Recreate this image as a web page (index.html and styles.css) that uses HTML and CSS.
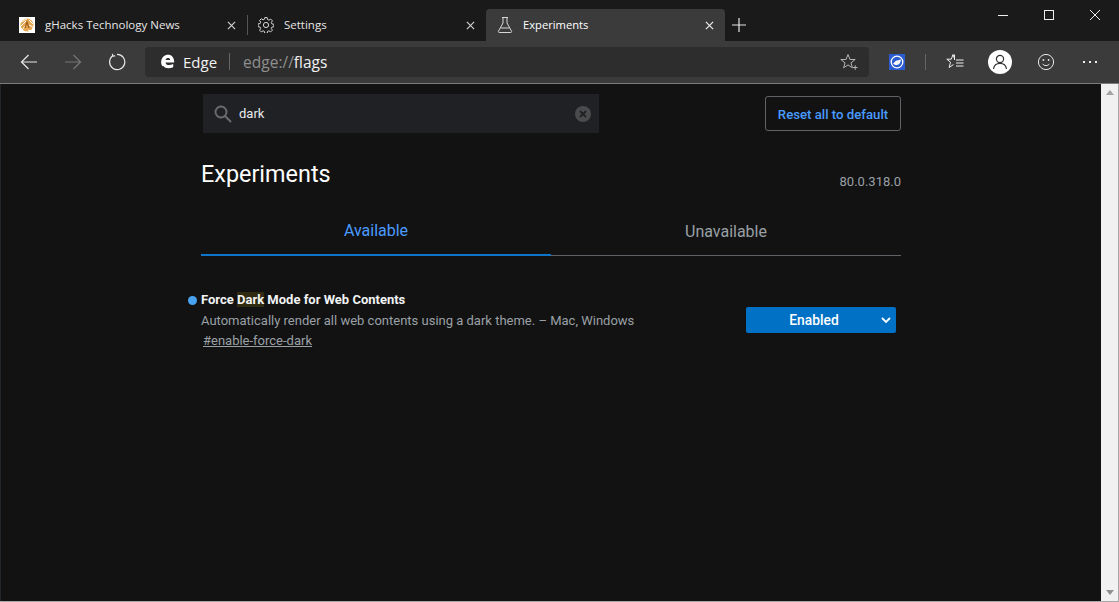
FILE: index.html
```html
<!DOCTYPE html>
<html lang="en">
<head>
<meta charset="utf-8">
<title>Experiments</title>
<link rel="stylesheet" href="styles.css">
</head>
<body>
<div class="window">
  <header class="titlebar">
    <div class="tab">
      <svg class="tab-icon" viewBox="0 0 16 16"><rect width="16" height="16" fill="#fff"/><circle cx="8" cy="8" r="6.5" fill="#e8a94e"/><path d="M2 5l6-3M2 9l5-5M3 13l4-5M10 3l4 4M10 8l4 2M9 13l3 1" stroke="#fff" stroke-width="1" fill="none"/><path d="M6 11l2-6 2 6" stroke="#9a5a1a" stroke-width="1.2" fill="none"/></svg>
      <span class="tab-title">gHacks Technology News</span>
      <svg class="tab-close" viewBox="0 0 10 10"><path d="M1 1l8 8M9 1l-8 8"/></svg>
    </div>
    <div class="tab tab-divided">
      <svg class="tab-icon gear" viewBox="0 0 16 16"><circle cx="8" cy="8" r="2.6"/><path d="M6.8.6h2.400l.4 2 1.300.6 1.800-1.100 1.700 1.700-1.100 1.800.6 1.300 2 .4v2.400l-2 .4-.6 1.300 1.100 1.800-1.700 1.700-1.800-1.100-1.300.6-.4 2H6.800l-.4-2-1.300-.6-1.800 1.100-1.700-1.700 1.100-1.800-.6-1.300-2-.4V6.900l2-.4.6-1.300-1.100-1.800 1.700-1.700 1.800 1.100 1.300-.6z"/></svg>
      <span class="tab-title">Settings</span>
      <svg class="tab-close" viewBox="0 0 10 10"><path d="M1 1l8 8M9 1l-8 8"/></svg>
    </div>
    <div class="tab tab-active">
      <svg class="tab-icon flask" viewBox="0 0 16 16"><path d="M5 .5h6M6 .5v5.500L1.500 14.200c-.3.6 0 1.300.7 1.300h11.600c.7 0 1-.7.7-1.300L10 6V.5M3.800 11h8.400"/></svg>
      <span class="tab-title tab-title-active">Experiments</span>
      <svg class="tab-close" viewBox="0 0 10 10"><path d="M1 1l8 8M9 1l-8 8"/></svg>
    </div>
    <svg class="new-tab" viewBox="0 0 14 14"><path d="M7 0v14M0 7h14"/></svg>
    <div class="window-controls">
      <svg class="win-btn" viewBox="0 0 12 12"><path d="M1 6.500h10"/></svg>
      <svg class="win-btn" viewBox="0 0 12 12"><rect x="1.500" y="1.500" width="9" height="9"/></svg>
      <svg class="win-btn" viewBox="0 0 12 12"><path d="M1 1l10 10M11 1L1 11"/></svg>
    </div>
  </header>

  <nav class="toolbar">
    <svg class="nav-icon" viewBox="0 0 18 18"><path d="M17 9H1.500M8.500 2L1.500 9l7 7"/></svg>
    <svg class="nav-icon nav-disabled" viewBox="0 0 18 18"><path d="M1 9h15.500M9.500 2l7 7-7 7"/></svg>
    <svg class="nav-icon" viewBox="0 0 18 18"><path d="M4.800 2.800A7.600 7.600 0 1 0 9 1.400M4.400 .8l.4 2.200 2.400-.2"/></svg>
    <div class="omnibox">
      <svg class="edge-logo" viewBox="0 0 16 16"><path fill="#fff" d="M1.200 8.300C1.600 3.400 5 .8 8.600.8c4 0 6.700 3 6.500 8.200H5.900c.2 2.700 3.800 3.800 8.200 1.600v3.500c-4.600 2-8.700 1.300-10.400-1.200C2.700 14 1.100 11.500 1.200 8.300zM5.900 6.300h4.900C10.700 3.800 6.800 3.700 5.900 6.300z"/></svg>
      <span class="omni-brand">Edge</span>
      <span class="omni-sep"></span>
      <span class="omni-url">edge://<b>flags</b></span>
      <svg class="omni-star" viewBox="0 0 18 18"><path d="M8 1.500l2 5h5.200l-4.200 3.300 1.400 5L8 11.900l-4.400 2.900 1.400-5L.8 6.500H6zM13 14.500h4.500M15.200 12.300v4.500"/></svg>
    </div>
    <div class="ext-icon">
      <svg viewBox="0 0 16 16"><circle cx="8" cy="8" r="5.800" fill="none" stroke="#fff" stroke-width="1.300"/><path fill="#fff" d="M4 9.500c1-.5 2-2.500 4-3 1.500-.4 3-.6 4-1.200-.3 3-1.500 5.700-4.500 5.700-1.500 0-2.800-.6-3.500-1.500z"/></svg>
    </div>
    <span class="tool-sep"></span>
    <svg class="fav-icon" viewBox="0 0 18 18"><path d="M8.500 7V1.500M7 1.500L5.300 6.200H.8l3.700 3-1.400 5.300 4.400-3M7 1.500l1.700 4.700M10 7h7.500M10 10h7.500M10 13h7.500"/></svg>
    <div class="profile">
      <svg viewBox="0 0 16 16"><circle cx="8" cy="5" r="3.600"/><path d="M1.500 15c.5-3.500 3-5.600 6.500-5.600s6 2.100 6.500 5.600"/></svg>
    </div>
    <svg class="smile" viewBox="0 0 18 18"><circle cx="9" cy="9" r="7.600"/><circle class="eye" cx="6.400" cy="7" r=".9"/><circle class="eye" cx="11.600" cy="7" r=".9"/><path d="M5.500 10.800c1.800 2.400 5.200 2.400 7 0"/></svg>
    <div class="more"><i></i><i></i><i></i></div>
  </nav>

  <div class="viewport">
    <main class="page">
      <div class="container">
        <div class="search-row">
          <div class="search">
            <svg class="search-icon" viewBox="0 0 18 18"><circle cx="7" cy="7" r="5.500"/><path d="M11 11l6 6"/></svg>
            <span class="search-text">dark</span>
            <svg class="search-clear" viewBox="0 0 16 16"><circle cx="8" cy="8" r="8" fill="#4a4b4d"/><path d="M5 5l6 6M11 5l-6 6" stroke="#202124" stroke-width="1.800"/></svg>
          </div>
          <button class="reset">Reset all to default</button>
        </div>
        <div class="heading-row">
          <h1 class="heading">Experiments</h1>
          <span class="version">80.0.318.0</span>
        </div>
        <div class="tabs">
          <div class="page-tab page-tab-active">Available</div>
          <div class="page-tab">Unavailable</div>
        </div>
        <section class="flag">
          <div class="flag-info">
            <h2 class="flag-name"><span class="dot"></span>Force <mark>Dark</mark> Mode for Web Contents</h2>
            <p class="flag-desc">Automatically render all web contents using a dark theme. – Mac, Windows</p>
            <a class="flag-link" href="#enable-force-dark">#enable-force-dark</a>
          </div>
          <div class="select">
            <span>Enabled</span>
            <svg viewBox="0 0 10 7"><path d="M1 1l4 4 4-4"/></svg>
          </div>
        </section>
      </div>
    </main>
    <div class="scrollbar">
      <span class="arrow-up"></span>
      <span class="arrow-down"></span>
    </div>
  </div>
</div>
</body>
</html>
```
FILE: styles.css
```css
* { box-sizing: border-box; }
html, body { margin: 0; height: 100%; overflow: hidden; }
body { background: #121212; font-family: Roboto, "Liberation Sans", sans-serif; }

.window { width: 1119px; height: 602px; display: flex; flex-direction: column; border-bottom: 1px solid #a8a8a8; }

/* title bar */
.titlebar { height: 41px; flex: none; background: #1a1a1a; display: flex; padding: 9px 0 0 8px; position: relative; }
.tab { width: 239px; height: 32px; display: flex; align-items: center; padding: 0 11px 0 11px; color: #e6e6e6; font: 11.500px "Open Sans", "Noto Sans", sans-serif; position: relative; }
.tab-divided::before { content: ""; position: absolute; left: 0; top: 6px; height: 20px; width: 1px; background: #555; }
.tab-active { background: #3b3b3b; border-radius: 4px 4px 0 0; color: #fff; }
.tab-icon { width: 16px; height: 16px; flex: none; margin-right: 10px; }
.gear, .flask { fill: none; stroke: #d8d8d8; stroke-width: 1; }
.tab-title { flex: 1; white-space: nowrap; padding-bottom: 2px; }
.tab-title-active { font-size: 11.200px; }
.tab-close { width: 9px; height: 9px; flex: none; fill: none; stroke: #d0d0d0; stroke-width: 1.300; }
.tab-active .tab-close { stroke: #f0f0f0; }
.new-tab { width: 14px; height: 14px; flex: none; margin: 9px 0 0 7px; fill: none; stroke: #e6e6e6; stroke-width: 1.200; }
.window-controls { margin-left: auto; margin-top: -9px; display: flex; height: 30px; align-items: center; padding-right: 18px; gap: 34px; }
.win-btn { width: 12px; height: 12px; fill: none; stroke: #eee; stroke-width: 1; }

/* toolbar */
.toolbar { height: 43px; flex: none; background: #3b3b3b; border-bottom: 1px solid #7a7a7a; display: flex; align-items: center; padding: 5px 21px 6px 20px; }
.nav-icon { width: 18px; height: 18px; flex: none; margin-right: 26px; fill: none; stroke: #e8e8e8; stroke-width: 1.200; }
.nav-disabled { stroke: #777; }
.omnibox { width: 724px; height: 30px; margin-left: -7px; background: #2d2d2d; border-radius: 4px; display: flex; align-items: center; padding: 0 11px 0 15px; font: 15px "Open Sans", "Noto Sans", sans-serif; }
.edge-logo { width: 15px; height: 15px; flex: none; margin-right: 8px; }
.omni-brand { color: #f2f2f2; }
.omni-sep { width: 1px; height: 17px; background: #666; margin: 0 13px 0 12px; }
.omni-url { color: #8f8f8f; flex: 1; font-size: 15.500px; }
.omni-url b { color: #f2f2f2; font-weight: 400; }
.omni-star { width: 18px; height: 18px; flex: none; fill: none; stroke: #b5b5b5; stroke-width: 1; }
.ext-icon { width: 16px; height: 16px; flex: none; margin-left: 20px; background: #2a5bd0; }
.ext-icon svg { display: block; }
.tool-sep { width: 1px; height: 16px; background: #666; margin: 0 20px; flex: none; }
.fav-icon { width: 18px; height: 18px; flex: none; fill: none; stroke: #efefef; stroke-width: 1; }
.profile { width: 24px; height: 24px; border-radius: 50%; background: #fff; flex: none; margin-left: 24px; padding: 4px; }
.profile svg { display: block; fill: none; stroke: #333; stroke-width: 1.200; }
.smile { width: 18px; height: 18px; flex: none; margin-left: 25px; fill: none; stroke: #e8e8e8; stroke-width: 1; }
.smile .eye { fill: #e8e8e8; stroke: none; }
.more { display: flex; gap: 4px; margin-left: 28px; flex: none; }
.more i { width: 2px; height: 2px; background: #eee; }

/* page */
.viewport { flex: 1; display: flex; min-height: 0; border-left: 1px solid #20262a; }
.page { flex: 1; background: #121212; }
.container { width: 700px; margin-left: 200px; }
.search-row { display: flex; justify-content: space-between; align-items: center; height: 39px; margin-top: 10px; padding-left: 2px; }
.search { width: 396px; height: 39px; background: #202124; display: flex; align-items: center; padding: 0 8px 0 11px; }
.search-icon { width: 18px; height: 18px; flex: none; fill: none; stroke: #6a6d70; stroke-width: 1.900; margin-right: 7px; }
.search-text { flex: 1; color: #e8eaed; font-size: 13px; }
.search-clear { width: 16px; height: 16px; flex: none; }
.reset { width: 136px; height: 35px; background: transparent; border: 1px solid #5f6368; border-radius: 3px; color: #4a9bff; font: 500 13.200px Roboto, sans-serif; padding: 2px 0 0; }

.heading-row { display: flex; justify-content: space-between; align-items: flex-end; margin-top: 26px; height: 29px; }
.heading { margin: 0 0 -2px; color: #fff; font-size: 23.400px; font-weight: 400; line-height: 31px; }
.version { color: #9aa0a6; font-size: 13px; line-height: 15px; margin-bottom: -1px; }

.tabs { display: flex; margin-top: 27px; }
.page-tab { width: 350px; height: 41px; text-align: center; font-size: 16px; line-height: 17px; padding-top: 8px; color: #9aa0a6; border-bottom: 1px solid #5f6368; }
.page-tab-active { color: #4a9bff; border-bottom: 2px solid #0f75c9; padding-top: 7px; }

.flag { display: flex; justify-content: space-between; margin-top: 33px; }
.flag-info { min-width: 0; }
.flag-name { margin: 0 0 1px; padding-top: 1px; font-size: 13px; font-weight: 700; line-height: 20px; color: #f1f3f4; position: relative; }
.flag-name mark { background: #302b11; color: inherit; }
.dot { position: absolute; left: -13px; top: 7px; width: 9px; height: 9px; border-radius: 50%; background: #4aa3f0; }
.flag-desc { margin: 0; color: #9aa0a6; font-size: 13px; line-height: 20px; }
.flag-link { display: block; width: fit-content; margin-left: 2px; color: #9aa0a6; font-size: 13px; line-height: 19px; }
.select { width: 150px; height: 26px; margin: 18px 5px 0 0; background: #0071c5; border-radius: 2px; color: #fff; font-size: 13.800px; font-weight: 500; display: flex; align-items: center; position: relative; justify-content: center; padding-right: 14px; }
.select svg { position: absolute; right: 5px; top: 10px; width: 10px; height: 7px; fill: none; stroke: #fff; stroke-width: 1.800; }

/* scrollbar */
.scrollbar { width: 18px; flex: none; background: #f1f1f1; border-right: 1px solid #a8a8a8; display: flex; flex-direction: column; justify-content: space-between; align-items: center; padding: 6px 0; }
.arrow-up { width: 0; height: 0; border: 4px solid transparent; border-top: 0; border-bottom: 5px solid #a3a3a3; }
.arrow-down { width: 0; height: 0; border: 4px solid transparent; border-bottom: 0; border-top: 5px solid #8f8f8f; }
```
